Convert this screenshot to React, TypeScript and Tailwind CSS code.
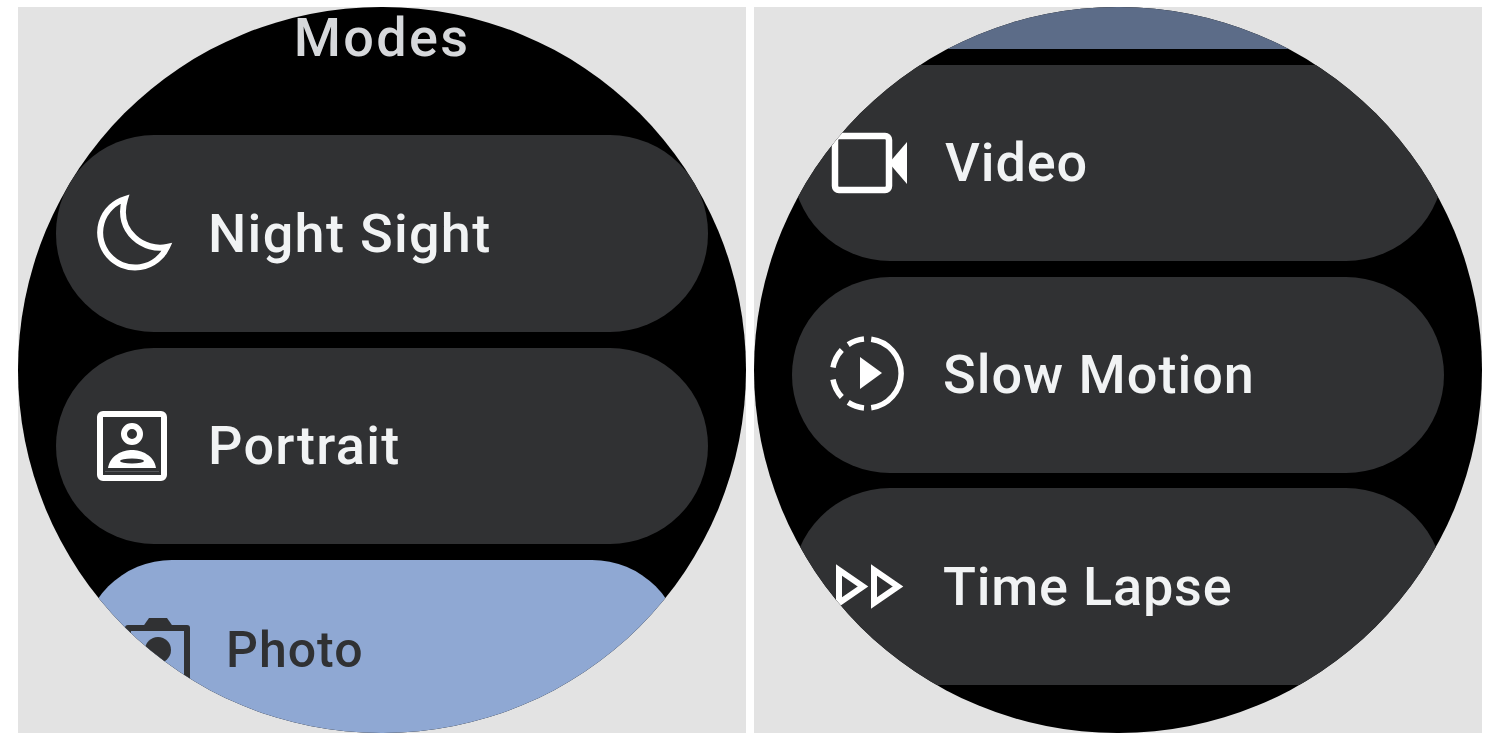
const font = { fontFamily: '"Roboto", "Liberation Sans", sans-serif' };

function Moon() {
  return (
    <svg viewBox="0 0 74 75" className="w-[74px] h-[75px] shrink-0 overflow-visible" fill="none" stroke="#fff" strokeWidth="6">
      <path d="M30 3 A35 35 0 1 0 72 51 C50 56 20 36 30 3 Z" strokeLinejoin="miter" />
    </svg>
  );
}

function Portrait() {
  return (
    <svg viewBox="0 0 70 70" className="w-[74px] h-[70px] shrink-0 overflow-visible" fill="none">
      <rect x="3" y="3" width="64" height="64" rx="3" stroke="#fff" strokeWidth="6" />
      <circle cx="35" cy="23" r="8" stroke="#fff" strokeWidth="6" />
      <path d="M11 57 C13 44 26 39 35 39 C44 39 57 44 59 57 Z" fill="#fff" />
      <ellipse cx="35" cy="50" rx="12" ry="2.500" fill="#303133" />
      <path d="M8 60.500 H62" stroke="#55575a" strokeWidth="1" />
    </svg>
  );
}

function Video() {
  return (
    <svg viewBox="0 0 75 60" className="w-[75px] h-[60px] shrink-0 overflow-visible" fill="none">
      <rect x="3" y="3" width="54" height="54" rx="4" stroke="#fff" strokeWidth="6.500" />
      <path d="M57 30 L75 9 V51 Z" fill="#fff" />
    </svg>
  );
}

function SlowMotion() {
  return (
    <svg viewBox="0 0 76 76" className="w-[76px] h-[76px] shrink-0 overflow-visible" fill="none" stroke="#fff" strokeWidth="5.500">
      <path d="M42.200 2.300 A34.500 34.500 0 0 1 42.200 70.700" />
      <path d="M35 2.100 A34.500 34.500 0 0 0 19.200 7.600" />
      <path d="M12.800 13 A34.500 34.500 0 0 0 4 30.500" />
      <path d="M4 42.500 A34.500 34.500 0 0 0 12.800 60" />
      <path d="M19.200 65.400 A34.500 34.500 0 0 0 35 70.900" />
      <path d="M31 20 L53 36 L31 52 Z" fill="#fff" stroke="none" />
    </svg>
  );
}

function TimeLapse() {
  return (
    <svg viewBox="0 0 67 43" className="w-[67px] h-[43px] shrink-0 overflow-visible" fill="none" stroke="#fff" strokeWidth="6">
      <path d="M3 5 L27 21.500 L3 38 Z" />
      <path d="M38 5 L62 21.500 L38 38 Z" />
    </svg>
  );
}

function Camera() {
  return (
    <svg viewBox="0 0 65 66" className="w-[65px] h-[66px] shrink-0 overflow-visible" fill="none" stroke="#303133" strokeWidth="6">
      <path d="M3 11 H62 V66 H3 Z" strokeLinejoin="round" />
      <path d="M17 11 L24 1 H42 L49 11 Z" fill="#303133" stroke="none" />
      <circle cx="33" cy="33" r="13" fill="#303133" stroke="none" />
    </svg>
  );
}

function Chip({ icon, label, h, pl, gap, tracking }: { icon: React.ReactNode; label: string; h: string; pl: string; gap: string; tracking: string }) {
  return (
    <div className={`mx-[38px] ${h} ${pl} ${gap} shrink-0 flex items-center rounded-[98px] bg-[#303133]`}>
      {icon}
      <span className={`text-[54px] font-medium leading-none text-[#f1f3f4] ${tracking} whitespace-nowrap`}>{label}</span>
    </div>
  );
}

export default function App() {
  return (
    <div className="h-[739px] w-[1500px] overflow-hidden bg-white flex gap-2 pl-[18px] pt-[7px]" style={font}>
      <div className="w-[728px] h-[726px] bg-[#e3e3e3]">
        <div className="w-full h-full rounded-full overflow-hidden blur-[0.7px]">
          <div className="h-full bg-black flex flex-col">
            <div className="h-[62px] mb-[66px] shrink-0 flex items-center justify-center text-[54px] font-medium leading-none text-[#d6d8db] tracking-[2.3px]">Modes</div>
            <div className="flex flex-col gap-4">
              <Chip icon={<Moon />} label="Night Sight" h="h-[197px]" pl="pl-[39px]" gap="gap-[39px]" tracking="tracking-[1.3px]" />
              <Chip icon={<Portrait />} label="Portrait" h="h-[196px]" pl="pl-[39px]" gap="gap-[39px]" tracking="tracking-[1.3px]" />
              <div className="mx-[64px] h-[180px] shrink-0 flex items-center gap-[36px] pl-[43px] rounded-[90px] bg-[#8fa8d3]">
                <Camera />
                <span className="text-[50px] font-medium leading-none text-[#303133] tracking-[1px] whitespace-nowrap">Photo</span>
              </div>
            </div>
          </div>
        </div>
      </div>
      <div className="w-[728px] h-[726px] bg-[#e3e3e3]">
        <div className="w-full h-full rounded-full overflow-hidden blur-[0.7px]">
          <div className="h-full bg-black flex flex-col gap-4">
            <div className="h-[42px] shrink-0 bg-[#5c6c88]" />
            <div className="flex flex-col gap-[15.5px]">
              <Chip icon={<Video />} label="Video" h="h-[196px]" pl="pl-[40px]" gap="gap-[38px]" tracking="tracking-[0.9px]" />
              <Chip icon={<SlowMotion />} label="Slow Motion" h="h-[196px]" pl="pl-[37px]" gap="gap-[38px]" tracking="tracking-[1px]" />
              <Chip icon={<TimeLapse />} label="Time Lapse" h="h-[197px]" pl="pl-[44px]" gap="gap-[40px]" tracking="tracking-[0.8px]" />
            </div>
          </div>
        </div>
      </div>
    </div>
  );
}
